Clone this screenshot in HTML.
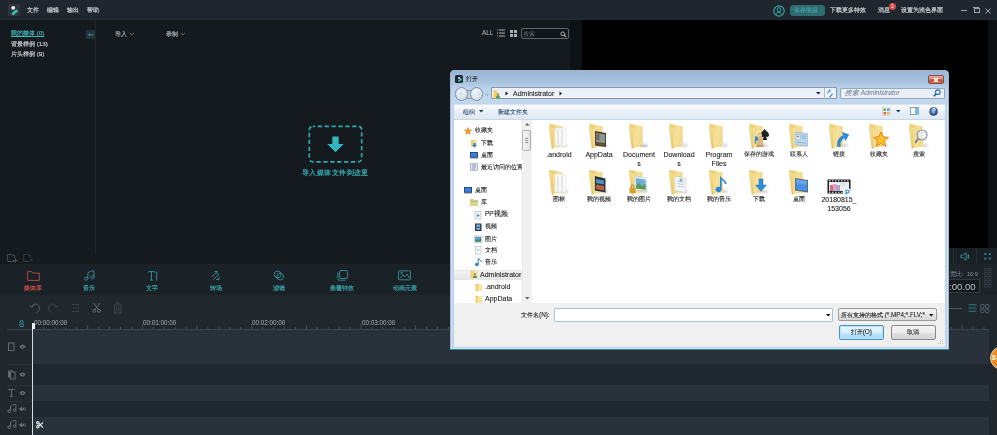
<!DOCTYPE html>
<html><head><meta charset="utf-8">
<style>
*{margin:0;padding:0;box-sizing:border-box}
html,body{width:997px;height:435px;overflow:hidden;background:#161b1f;font-family:"Liberation Sans",sans-serif;}
.a{position:absolute}
.t{position:absolute;white-space:nowrap;line-height:1}
/* top bar */
#top{left:0;top:0;width:997px;height:20px;background:#1f262d}
.mt{color:#c2c7cb;font-size:6.4px;top:6.8px;-webkit-text-stroke:0.22px currentColor}
/* media */
#media{left:0;top:20px;width:570px;height:244px;background:#151a1e}
#strip{left:570px;top:20px;width:12px;height:244px;background:#0e1215}
#prev{left:582px;top:20px;width:405.5px;height:228px;background:#000}
#prevr{left:987.5px;top:20px;width:9.5px;height:228px;background:#0c1013}
#ctrl{left:582px;top:248px;width:415px;height:16px;background:#1a2126}
#tabs{left:0;top:264px;width:582px;height:30.5px;background:#1a2127}
#tl{left:0;top:294.5px;width:997px;height:141px;background:#20282e}
.lbl{font-size:6.2px;top:284.5px;color:#38a0a4;-webkit-text-stroke:0.2px currentColor}
.tr{position:absolute;left:33px;width:956px}
.cj{-webkit-text-stroke:0.1px currentColor}
.t{will-change:transform}
</style></head><body>
<!-- TOP BAR -->
<div id="top" class="a">
  <div class="a" style="left:8px;top:4px;width:12px;height:12px;background:#2b3642;border-radius:1px"></div>
  <svg class="a" style="left:8px;top:4px" width="12" height="12"><circle cx="5.2" cy="3.8" r="1.9" fill="#eef2f4"/><path d="M3.3 9.3L8.5 5.2 10.2 7.3 5 11.4z" fill="#3cc0a0"/></svg>
  <div class="t mt" style="left:27px">文件</div>
  <div class="t mt" style="left:47px">编辑</div>
  <div class="t mt" style="left:67px">输出</div>
  <div class="t mt" style="left:87px">帮助</div>
  <svg class="a" style="left:772.5px;top:4.5px" width="12" height="12"><circle cx="6" cy="6" r="5.2" fill="none" stroke="#3aa6a0" stroke-width="1.2"/><ellipse cx="6" cy="4.8" rx="1.8" ry="2.2" fill="none" stroke="#3aa6a0" stroke-width="1"/><path d="M2.6 9.8c0.8-1.8 2-2.5 3.4-2.5s2.6 0.7 3.4 2.5" fill="none" stroke="#3aa6a0" stroke-width="1"/></svg>
  <div class="a" style="left:790px;top:5px;width:35px;height:11px;background:#2d6c6f;border-radius:3px"></div>
  <div class="t" style="left:794px;top:7px;font-size:6.3px;color:#56a2a4;-webkit-text-stroke:0.1px currentColor">保存项目</div>
  <div class="t mt" style="left:830px;top:7px">下载更多特效</div>
  <div class="t mt" style="left:878px;top:7px">消息</div>
  <div class="a" style="left:888.5px;top:2.5px;width:7px;height:7px;background:#e04a4a;border-radius:50%"></div>
  <div class="t" style="left:890.5px;top:3.5px;font-size:5px;color:#fff">1</div>
  <div class="t mt" style="left:901px;top:7px">设置为浅色界面</div>
  <div class="a" style="left:961px;top:10px;width:6px;height:1px;background:#9aa2a8"></div>
  <div class="a" style="left:974px;top:8px;width:6px;height:5px;border:1px solid #9aa2a8"></div>
  <div class="a" style="left:972.5px;top:7px;width:6px;height:1px;background:#9aa2a8"></div>
  <svg class="a" style="left:985px;top:7.5px" width="6" height="6"><path d="M0.5 0.5l5 5M5.5 0.5l-5 5" stroke="#9aa2a8" stroke-width="1"/></svg>
</div>

<div class="a" style="left:0;top:19px;width:997px;height:1px;background:#222b32"></div>
<!-- MEDIA PANEL -->
<div id="media" class="a"></div>
<div id="strip" class="a"></div>
<div class="a" style="left:95px;top:20px;width:1px;height:234px;background:#1f262b"></div>
<div class="t" style="left:11px;top:30px;font-size:6.2px;color:#3fb3b5;text-decoration:underline;-webkit-text-stroke:0.2px currentColor">我的媒体 (0)</div>
<div class="t" style="left:11px;top:41px;font-size:6.2px;color:#c2c8cc;-webkit-text-stroke:0.2px currentColor">背景样例 (13)</div>
<div class="t" style="left:11px;top:51.3px;font-size:6.2px;color:#c2c8cc;-webkit-text-stroke:0.2px currentColor">片头样例 (9)</div>
<div class="a" style="left:86px;top:29.5px;width:9px;height:9px;background:#26313a"></div>
<div class="t" style="left:87.5px;top:30.5px;font-size:7px;color:#3fb3b5">⇐</div>
<div class="t" style="left:115px;top:30.8px;font-size:6.3px;color:#a8b0b6;-webkit-text-stroke:0.2px currentColor">导入</div><svg class="a" style="left:129px;top:32px" width="6" height="4"><path d="M0.8 1l2 1.9 2-1.9" fill="none" stroke="#80888e" stroke-width="0.8"/></svg>
<div class="t" style="left:166px;top:30.8px;font-size:6.3px;color:#a8b0b6;-webkit-text-stroke:0.2px currentColor">录制</div><svg class="a" style="left:180px;top:32px" width="6" height="4"><path d="M0.8 1l2 1.9 2-1.9" fill="none" stroke="#80888e" stroke-width="0.8"/></svg>
<div class="t" style="left:482px;top:30px;font-size:6.3px;color:#b8bfc3">ALL</div>
<svg class="a" style="left:497px;top:29px" width="9" height="8"><g fill="#a8b0b6"><rect x="0" y="0.5" width="1" height="1"/><rect x="2" y="0.5" width="6" height="1"/><rect x="0" y="3.5" width="1" height="1"/><rect x="2" y="3.5" width="6" height="1"/><rect x="0" y="6.5" width="1" height="1"/><rect x="2" y="6.5" width="6" height="1"/></g></svg>
<svg class="a" style="left:510px;top:30px" width="8" height="7"><g fill="#a8b0b6"><rect x="0" y="0" width="3" height="3"/><rect x="4" y="0" width="3" height="3"/><rect x="0" y="4" width="3" height="3"/><rect x="4" y="4" width="3" height="3"/></g></svg>
<div class="a" style="left:521px;top:28px;width:48px;height:11px;border:1px solid #5d666d;border-radius:2px;background:#121619"></div>
<div class="t" style="left:523px;top:30.5px;font-size:6.2px;color:#6b7379">搜索</div>
<svg class="a" style="left:559.5px;top:30.5px" width="7" height="7"><circle cx="2.8" cy="2.8" r="1.9" fill="none" stroke="#aab2b6" stroke-width="1"/><line x1="4.2" y1="4.2" x2="6" y2="6" stroke="#aab2b6" stroke-width="1.1"/></svg>

<!-- import box -->
<svg class="a" style="left:308px;top:124.5px" width="56" height="39"><rect x="1.3" y="1.3" width="52.4" height="35.6" rx="3.5" fill="none" stroke="#2fa8b0" stroke-width="1.7" stroke-dasharray="4.3 2.6" stroke-dashoffset="2"/></svg>
<svg class="a" style="left:326.5px;top:136px" width="18" height="17"><path d="M5.3 0.5h6.4v7.6h5L8.5 16.3 0.3 8.1h5z" fill="#35b5c0"/></svg>
<div class="t" style="left:302px;top:169px;font-size:7.4px;letter-spacing:0.42px;color:#3aaeb8;-webkit-text-stroke:0.25px currentColor">导入媒体文件到这里</div>

<!-- small media icons -->
<svg class="a" style="left:6px;top:253px" width="30" height="10"><g fill="none" stroke="#4d575e" stroke-width="0.9"><path d="M8.5 8.5H1.7V1.4h4.3l0.8 0.9h1.7v3.2"/><path d="M9.5 5.5v4M7.5 7.5h4" stroke-width="1"/></g><g fill="none" stroke="#353d43" stroke-width="0.9"><path d="M23.5 8.5H17.7V1.4h4.3l0.8 0.9h1.7v2.5"/><path d="M24 5.5l2.5 3M26.5 5.5L24 8.5"/></g></svg>

<!-- PREVIEW -->
<div id="prev" class="a"></div>
<div id="prevr" class="a"></div>
<div id="ctrl" class="a"></div>


<!-- preview right controls -->
<div class="a" style="left:582px;top:264px;width:415px;height:31px;background:#1d242a"></div>
<div class="a" style="left:953px;top:249px;width:1px;height:14px;background:#262e34"></div>
<div class="a" style="left:975.5px;top:249px;width:1px;height:14px;background:#262e34"></div>
<svg class="a" style="left:959.5px;top:252px" width="12" height="9"><path d="M0.8 3.3h1.8l3.6-2.6v7.6L2.6 5.7H0.8z" fill="none" stroke="#379a9e" stroke-width="0.8"/><path d="M8.3 3v3" stroke="#379a9e" stroke-width="1.3" stroke-linecap="round"/></svg>
<svg class="a" style="left:983.5px;top:253px" width="8" height="7"><g fill="#2a7e82"><rect x="0.3" y="0" width="2" height="2"/><rect x="4.8" y="0" width="2" height="2"/><rect x="0.3" y="4.5" width="2" height="2"/><rect x="4.8" y="4.5" width="2" height="2"/></g></svg>
<div class="t" style="left:950px;top:272px;font-size:5.5px;color:#8a949a">宽比:</div>
<div class="t" style="left:966.5px;top:272px;font-size:5.5px;color:#8a949a">16:9</div>
<div class="a" style="left:930px;top:279.2px;width:50px;height:14px;background:#151a1e;border:1px solid #323b41"></div>
<div class="t" style="left:949.2px;top:281.6px;font-size:9.6px;color:#b9c1c5">:00.00</div>
<svg class="a" style="left:984px;top:268px" width="8" height="21"><g fill="none" stroke="#353e44" stroke-width="0.8"><rect x="0.5" y="0.5" width="2.5" height="2.5"/><rect x="4.5" y="0.5" width="2.5" height="2.5"/><rect x="0.5" y="4.5" width="2.5" height="2.5"/><rect x="4.5" y="4.5" width="2.5" height="2.5"/><rect x="0.5" y="8.5" width="2.5" height="2.5"/><rect x="4.5" y="8.5" width="2.5" height="2.5"/><rect x="0.5" y="12.5" width="2.5" height="2.5"/><rect x="4.5" y="12.5" width="2.5" height="2.5"/><rect x="0.5" y="16.5" width="2.5" height="2.5"/><rect x="4.5" y="16.5" width="2.5" height="2.5"/></g></svg>

<!-- TABS -->
<div id="tabs" class="a"></div>
<svg class="a" style="left:27px;top:271px" width="13" height="10"><path d="M0.6 0.6h4l1.2 1.5h6.5v7.3H0.6z" fill="none" stroke="#c24c48" stroke-width="0.9"/></svg>
<div class="t lbl" style="left:24px;color:#c64f4b">媒体库</div>
<svg class="a" style="left:84px;top:270px" width="11" height="11"><g fill="none" stroke="#39a2a6" stroke-width="0.8"><circle cx="2.3" cy="8.6" r="1.6"/><circle cx="8.4" cy="7.2" r="1.6"/><path d="M3.9 8.6V3C5 1.5 8 0.5 10 1v6.2"/></g></svg>
<div class="t lbl" style="left:83px">音乐</div>
<svg class="a" style="left:147.5px;top:270.5px" width="10" height="10"><g stroke="#39a2a6" stroke-width="0.8" fill="none"><path d="M0.5 1.6V0.6h6v1M3.5 0.6v8.5M2.2 9.1h2.6M8.6 0.4v9.2"/></g></svg>
<div class="t lbl" style="left:146px">文字</div>
<svg class="a" style="left:210px;top:270px" width="11" height="11"><g fill="none" stroke="#39a2a6" stroke-width="0.8"><path d="M1.5 7L7 1.5M4.5 1.5H7V4M3.5 9.5L9 4M9 6.5V9.5H6"/></g></svg>
<div class="t lbl" style="left:209.5px">转场</div>
<svg class="a" style="left:273px;top:270px" width="12" height="11"><g fill="none" stroke="#39a2a6" stroke-width="0.8"><circle cx="4.6" cy="4.4" r="3.4"/><circle cx="7.2" cy="6.6" r="3.4"/></g></svg>
<div class="t lbl" style="left:273px">滤镜</div>
<svg class="a" style="left:337px;top:270px" width="12" height="11"><g fill="none" stroke="#39a2a6" stroke-width="0.8"><rect x="2.5" y="0.5" width="8" height="8" rx="1.5"/><path d="M0.8 2.5v6.5a1.2 1.2 0 0 0 1.2 1.2h6.5"/></g></svg>
<div class="t lbl" style="left:330px">叠覆特效</div>
<svg class="a" style="left:398px;top:270px" width="13" height="11"><g fill="none" stroke="#39a2a6" stroke-width="0.8"><rect x="0.5" y="0.8" width="12" height="9" rx="0.8"/><path d="M2 8.2l3-3.2 2 1.8 2.2-2.8 2 4.2"/><circle cx="3.6" cy="3" r="0.8"/></g></svg>
<div class="t lbl" style="left:393px">动画元素</div>

<!-- TIMELINE -->
<div id="tl" class="a"></div>
<svg class="a" style="left:28px;top:301px" width="100" height="13"><g fill="none" stroke="#5f686e" stroke-width="0.9">
<path d="M3.8 5.2A4.2 4.2 0 1 1 8.5 11.3"/><path d="M1.6 4.2L3.6 6.4 5.9 4.6"/>
</g><g fill="none" stroke="#434b51" stroke-width="0.9">
<path d="M28.2 5.2A4.2 4.2 0 1 0 23.5 11.3"/><path d="M30.4 4.2L28.4 6.4 26.1 4.6"/>
<path d="M44 3.5h8M45 7h6M44 10.5h8" stroke-dasharray="2 0.6"/>
</g>
<g fill="none" stroke="#6a7379" stroke-width="0.9"><circle cx="66.3" cy="9.8" r="1.5"/><circle cx="71" cy="9.8" r="1.5"/><path d="M67 8.5L71.8 2M70.3 8.5L65.5 2"/></g>
<g fill="none" stroke="#434b51" stroke-width="0.9"><path d="M85.5 4h8.5M86.5 4.5v7.5h6.5v-7.5M88.5 3V2h2.5v1M88.5 6v4.5M91 6v4.5"/></g>
</svg>
<svg class="a" style="left:18.5px;top:320px" width="6" height="8"><g fill="none" stroke="#35a8ac" stroke-width="0.9"><path d="M1 3V2a1.6 1.6 0 0 1 3.2 0v1"/><rect x="0.7" y="3.8" width="3.8" height="2.8" rx="1.2"/></g></svg>
<div class="t" style="left:34px;top:319.8px;font-size:6.3px;color:#a9b1b6">00:00:00:00</div>
<div class="t" style="left:142.5px;top:319.8px;font-size:6.3px;color:#a9b1b6">00:01:00:00</div>
<div class="t" style="left:252px;top:319.8px;font-size:6.3px;color:#a9b1b6">00:02:00:00</div>
<div class="t" style="left:361.5px;top:319.8px;font-size:6.3px;color:#a9b1b6">00:03:00:00</div>
<div class="a" style="left:7px;top:329px;width:982px;height:1px;background:#3c464d"></div>
<svg class="a" style="left:33px;top:324px" width="956" height="5" id="ticks"><g fill="#4a545b"><rect x="10.53" y="3" width="0.9" height="2"/><rect x="21.46" y="3" width="0.9" height="2"/><rect x="32.39" y="3" width="0.9" height="2"/><rect x="43.32" y="3" width="0.9" height="2"/><rect x="54.25" y="1" width="0.9" height="4"/><rect x="65.18" y="3" width="0.9" height="2"/><rect x="76.11" y="3" width="0.9" height="2"/><rect x="87.04" y="3" width="0.9" height="2"/><rect x="97.97" y="3" width="0.9" height="2"/><rect x="108.90" y="0" width="0.9" height="5"/><rect x="119.83" y="3" width="0.9" height="2"/><rect x="130.76" y="3" width="0.9" height="2"/><rect x="141.69" y="3" width="0.9" height="2"/><rect x="152.62" y="3" width="0.9" height="2"/><rect x="163.55" y="1" width="0.9" height="4"/><rect x="174.48" y="3" width="0.9" height="2"/><rect x="185.41" y="3" width="0.9" height="2"/><rect x="196.34" y="3" width="0.9" height="2"/><rect x="207.27" y="3" width="0.9" height="2"/><rect x="218.20" y="0" width="0.9" height="5"/><rect x="229.13" y="3" width="0.9" height="2"/><rect x="240.06" y="3" width="0.9" height="2"/><rect x="250.99" y="3" width="0.9" height="2"/><rect x="261.92" y="3" width="0.9" height="2"/><rect x="272.85" y="1" width="0.9" height="4"/><rect x="283.78" y="3" width="0.9" height="2"/><rect x="294.71" y="3" width="0.9" height="2"/><rect x="305.64" y="3" width="0.9" height="2"/><rect x="316.57" y="3" width="0.9" height="2"/><rect x="327.50" y="0" width="0.9" height="5"/><rect x="338.43" y="3" width="0.9" height="2"/><rect x="349.36" y="3" width="0.9" height="2"/><rect x="360.29" y="3" width="0.9" height="2"/><rect x="371.22" y="3" width="0.9" height="2"/><rect x="382.15" y="1" width="0.9" height="4"/><rect x="393.08" y="3" width="0.9" height="2"/><rect x="404.01" y="3" width="0.9" height="2"/><rect x="414.94" y="3" width="0.9" height="2"/><rect x="425.87" y="3" width="0.9" height="2"/><rect x="436.80" y="0" width="0.9" height="5"/><rect x="447.73" y="3" width="0.9" height="2"/><rect x="458.66" y="3" width="0.9" height="2"/><rect x="469.59" y="3" width="0.9" height="2"/><rect x="480.52" y="3" width="0.9" height="2"/><rect x="491.45" y="1" width="0.9" height="4"/><rect x="502.38" y="3" width="0.9" height="2"/><rect x="513.31" y="3" width="0.9" height="2"/><rect x="524.24" y="3" width="0.9" height="2"/><rect x="535.17" y="3" width="0.9" height="2"/><rect x="546.10" y="0" width="0.9" height="5"/><rect x="557.03" y="3" width="0.9" height="2"/><rect x="567.96" y="3" width="0.9" height="2"/><rect x="578.89" y="3" width="0.9" height="2"/><rect x="589.82" y="3" width="0.9" height="2"/><rect x="600.75" y="1" width="0.9" height="4"/><rect x="611.68" y="3" width="0.9" height="2"/><rect x="622.61" y="3" width="0.9" height="2"/><rect x="633.54" y="3" width="0.9" height="2"/><rect x="644.47" y="3" width="0.9" height="2"/><rect x="655.40" y="0" width="0.9" height="5"/><rect x="666.33" y="3" width="0.9" height="2"/><rect x="677.26" y="3" width="0.9" height="2"/><rect x="688.19" y="3" width="0.9" height="2"/><rect x="699.12" y="3" width="0.9" height="2"/><rect x="710.05" y="1" width="0.9" height="4"/><rect x="720.98" y="3" width="0.9" height="2"/><rect x="731.91" y="3" width="0.9" height="2"/><rect x="742.84" y="3" width="0.9" height="2"/><rect x="753.77" y="3" width="0.9" height="2"/><rect x="764.70" y="0" width="0.9" height="5"/><rect x="775.63" y="3" width="0.9" height="2"/><rect x="786.56" y="3" width="0.9" height="2"/><rect x="797.49" y="3" width="0.9" height="2"/><rect x="808.42" y="3" width="0.9" height="2"/><rect x="819.35" y="1" width="0.9" height="4"/><rect x="830.28" y="3" width="0.9" height="2"/><rect x="841.21" y="3" width="0.9" height="2"/><rect x="852.14" y="3" width="0.9" height="2"/><rect x="863.07" y="3" width="0.9" height="2"/><rect x="874.00" y="0" width="0.9" height="5"/><rect x="884.93" y="3" width="0.9" height="2"/><rect x="895.86" y="3" width="0.9" height="2"/><rect x="906.79" y="3" width="0.9" height="2"/><rect x="917.72" y="3" width="0.9" height="2"/><rect x="928.65" y="1" width="0.9" height="4"/><rect x="939.58" y="3" width="0.9" height="2"/><rect x="950.51" y="3" width="0.9" height="2"/></g></svg>
<!-- tracks -->
<div class="a" style="left:33px;top:330px;width:956px;height:34px;background:#29323a"></div>
<div class="a" style="left:33px;top:364px;width:956px;height:21px;background:#20282f"></div>
<div class="a" style="left:33px;top:385px;width:956px;height:16px;background:#29323a"></div>
<div class="a" style="left:33px;top:401px;width:956px;height:16px;background:#20282f"></div>
<div class="a" style="left:33px;top:417px;width:956px;height:18px;background:#29323a"></div>
<div class="a" style="left:7px;top:364px;width:26px;height:1px;background:#2a3238"></div>
<div class="a" style="left:7px;top:385px;width:26px;height:1px;background:#2a3238"></div>
<div class="a" style="left:7px;top:401px;width:26px;height:1px;background:#2a3238"></div>
<div class="a" style="left:7px;top:417px;width:26px;height:1px;background:#2a3238"></div>
<svg class="a" style="left:6px;top:340px" width="22" height="92"><g fill="none" stroke="#6c757b" stroke-width="0.9">
<rect x="2.5" y="3" width="5.5" height="7.5"/>
<rect x="4.5" y="32" width="4.5" height="7"/><path d="M2.5 37.5v-6.5h4.5"/><path d="M3.5 37.5v-5.5"/>
<path d="M2.3 50.3v-0.8h6.5v0.8M5.5 49.5v6.8M4 56.3h3"/>
<circle cx="3.2" cy="71.2" r="1.3"/><circle cx="8.6" cy="70.2" r="1.3"/><path d="M4.5 71.2v-5.2c1.2-1 3.5-1.6 5.4-1.6v5.8"/>
<circle cx="3.2" cy="87.2" r="1.3"/><circle cx="8.6" cy="86.2" r="1.3"/><path d="M4.5 87.2v-5.2c1.2-1 3.5-1.6 5.4-1.6v5.8"/>
</g><path d="M13.5 6.8c1.2-1.6 2.2-2 3-2s1.8 0.4 3 2c-1.2 1.6-2.2 2-3 2s-1.8-0.4-3-2z" fill="#6c757b"/><circle cx="16.5" cy="6.8" r="0.9" fill="#222a30"/><path d="M13.5 34.5c1.2-1.6 2.2-2 3-2s1.8 0.4 3 2c-1.2 1.6-2.2 2-3 2s-1.8-0.4-3-2z" fill="#6c757b"/><circle cx="16.5" cy="34.5" r="0.9" fill="#222a30"/><path d="M13.5 53c1.2-1.6 2.2-2 3-2s1.8 0.4 3 2c-1.2 1.6-2.2 2-3 2s-1.8-0.4-3-2z" fill="#6c757b"/><circle cx="16.5" cy="53" r="0.9" fill="#222a30"/><path d="M13 69l3.2-2.4v4.8z" fill="#6c757b"/><rect x="16.6" y="67.8" width="1.6" height="2.4" fill="#6c757b"/><path d="M19.3 67.4v3.2" stroke="#6c757b" stroke-width="0.8"/><path d="M13 85l3.2-2.4v4.8z" fill="#6c757b"/><rect x="16.6" y="83.8" width="1.6" height="2.4" fill="#6c757b"/><path d="M19.3 83.4v3.2" stroke="#6c757b" stroke-width="0.8"/></svg>
<svg class="a" style="left:36px;top:421px" width="8" height="8"><g fill="none" stroke="#dfe4e6" stroke-width="1.1"><circle cx="1.8" cy="1.8" r="1.2"/><circle cx="1.8" cy="5.8" r="1.2"/><path d="M2.8 2.5L7 6.5M2.8 5L7 1.5"/></g></svg>
<div class="a" style="left:32px;top:323px;width:1.2px;height:112px;background:#d8dde0"></div>
<div class="a" style="left:32px;top:322.5px;width:3px;height:6px;background:#f2f4f5;border-radius:1px 1px 0 0"></div>
<!-- right side of timeline toolbar -->
<div class="a" style="left:940px;top:307.5px;width:22px;height:1px;background:#4c565c"></div>
<svg class="a" style="left:967px;top:304px" width="24" height="9"><g fill="none" stroke="#33959a" stroke-width="0.8"><path d="M1.5 0.8h8M1.5 4h8M1.5 7.2h8"/></g><g fill="none" stroke="#59636a" stroke-width="0.9"><rect x="13.5" y="0.5" width="3.5" height="3.5" rx="0.8"/><rect x="18.5" y="0.5" width="3.5" height="3.5" rx="0.8"/><rect x="13.5" y="5" width="3.5" height="3.5" rx="0.8"/><rect x="18.5" y="5" width="3.5" height="3.5" rx="0.8"/></g></svg>

<!-- DIALOG -->
<svg width="0" height="0" style="position:absolute">
<defs><radialGradient id="sh"><stop offset="0" stop-color="#000" stop-opacity="0.16"/><stop offset="1" stop-color="#000" stop-opacity="0"/></radialGradient>
<linearGradient id="gb" x1="0" y1="0" x2="1" y2="0.3"><stop offset="0" stop-color="#e9c65e"/><stop offset="0.6" stop-color="#f6e09a"/><stop offset="1" stop-color="#f2d98a"/></linearGradient>
<linearGradient id="gf" x1="0" y1="0" x2="0.3" y2="1"><stop offset="0" stop-color="#f6df8e"/><stop offset="1" stop-color="#ecc966"/></linearGradient>
<symbol id="fb" viewBox="0 0 18 25"><path d="M1.5 0L13.5 2.3 14 22.6 5 23.8Z" fill="url(#gb)"/></symbol>
<symbol id="ff" viewBox="0 0 18 25"><path d="M0 0.5L5.3 3.7 5.5 22.6 3 25Z" fill="url(#gf)" stroke="#d9b452" stroke-width="0.35"/><path d="M5 4L5.1 22.3" stroke="#fff6d6" stroke-width="0.7"/></symbol>
</defs>
</svg>
<div class="a" style="left:450px;top:70px;width:499px;height:280px;background:#bcd4ec;border:1px solid #9fb6cc;border-radius:4px 4px 1px 1px;box-shadow:inset 0 0 0 1px #cfe0f2"></div>
<div class="a" style="left:451px;top:71px;width:497px;height:32px;background:linear-gradient(#9ab6d5,#a9c3df 35%,#bcd3eb 55%,#c1d8ef);border-radius:3px 3px 0 0"></div>
<div class="a" style="left:455px;top:75px;width:8px;height:8px;background:#1e2b36;border-radius:1.5px"></div>
<div class="a" style="left:457.5px;top:76.5px;width:2.5px;height:2.5px;background:#eef;border-radius:50%"></div>
<div class="a" style="left:457.5px;top:79px;width:4px;height:2px;background:#3cc0a0;transform:rotate(-40deg)"></div>
<div class="t cj" style="left:465.5px;top:76px;font-size:6.4px;color:#1a1a1a">打开</div>
<div class="a" style="left:928px;top:75px;width:16px;height:9px;background:linear-gradient(#e6b0a2,#d48a78 45%,#c4503c 55%,#cf6a52);border:1px solid #8c4a3e;border-radius:2px"></div>
<svg class="a" style="left:932px;top:76.5px" width="8" height="6"><path d="M2 1l4 4M6 1L2 5" stroke="#fff" stroke-width="1.4"/></svg>
<!-- nav -->
<div class="a" style="left:460px;top:89.5px;width:18px;height:9.5px;background:#c3d3e2;border-top:1px solid #8a9cae;border-bottom:1px solid #8a9cae"></div>
<div class="a" style="left:454.8px;top:87.3px;width:13.4px;height:13.4px;border-radius:50%;background:radial-gradient(circle at 50% 40%,#f2f6fa,#dbe4ec 60%,#c4d0dc);border:1px solid #7f91a3"></div>
<div class="a" style="left:469.6px;top:87.3px;width:13.4px;height:13.4px;border-radius:50%;background:radial-gradient(circle at 50% 40%,#f2f6fa,#dbe4ec 60%,#c4d0dc);border:1px solid #7f91a3"></div>
<svg class="a" style="left:457px;top:90px" width="26" height="8"><g fill="none" stroke="#d6dee6" stroke-width="1.2"><path d="M7.5 4h-4M5 2L3 4l2 2M19 4h4M21.5 2l2 2-2 2"/></g></svg>

<svg class="a" style="left:484.5px;top:92.5px" width="4" height="4"><path d="M0.5 1h3L2 3z" fill="none" stroke="#9ab0c4" stroke-width="0.6"/></svg>
<div class="a" style="left:490.5px;top:87px;width:346px;height:12px;background:linear-gradient(#e9eef7,#f0f4fa);border:1px solid #8496a8;border-radius:1px"></div>
<div class="a" style="left:823.5px;top:88px;width:1px;height:10.5px;background:#a9bccd"></div>
<svg class="a" style="left:493px;top:88.5px" width="8" height="10"><path d="M0.5 1L4 1.5V9L0.5 9.5Z" fill="#f0cf60"/><circle cx="5" cy="5" r="1.3" fill="#c8a070"/><path d="M3 9c0-2 1-3 2-3s2 1 2 3z" fill="#4aa050"/></svg>
<svg class="a" style="left:504.5px;top:91px" width="4" height="5"><path d="M0.5 0.5L3 2.5 0.5 4.5z" fill="#111"/></svg>
<div class="t" style="left:512.5px;top:89.5px;font-size:7px;color:#1e1e1e;-webkit-text-stroke:0.1px currentColor">Administrator</div>
<svg class="a" style="left:558.5px;top:91px" width="4" height="5"><path d="M0.5 0.5L3 2.5 0.5 4.5z" fill="#111"/></svg>
<svg class="a" style="left:815.5px;top:92px" width="5" height="3"><path d="M0 0h4.5L2.25 2.5z" fill="#1a1a40"/></svg>
<svg class="a" style="left:826px;top:89px" width="8" height="9"><path d="M2 4.5A2.5 2.5 0 0 1 4 1.5M6 4.5A2.5 2.5 0 0 1 4 7.5" fill="none" stroke="#2a7ad0" stroke-width="1"/><path d="M3.2 0.2l1.8 1.3-1.8 1.3zM4.8 6.2l-1.8 1.3 1.8 1.3z" fill="#2a7ad0"/></svg>
<div class="a" style="left:839.5px;top:87.5px;width:105px;height:11.5px;background:#e9eef7;border:1px solid #95a8ba;border-radius:1px"></div>
<div class="t cj" style="left:845px;top:90px;font-size:6.6px;color:#7c8a96;font-style:italic">搜索 Administrator</div>
<svg class="a" style="left:933px;top:89px" width="8" height="8"><circle cx="4.8" cy="3.2" r="2.3" fill="none" stroke="#2a6fc0" stroke-width="1.1"/><path d="M3.2 4.8L0.8 7.2" stroke="#1f4f90" stroke-width="1.4"/></svg>
<!-- toolbar -->
<div class="a" style="left:454px;top:103.5px;width:491px;height:16px;background:linear-gradient(#fafcfe,#e6eef7 55%,#dfe9f4);border-top:1px solid #d9e4ef;border-bottom:1px solid #c9d7e5"></div>
<div class="t" style="left:463px;top:108.8px;font-size:6.4px;color:#2a4262;-webkit-text-stroke:0.08px currentColor">组织</div>
<svg class="a" style="left:478.5px;top:110px" width="5" height="3"><path d="M0 0h4.5L2.25 2.5z" fill="#1e395b"/></svg>
<div class="t" style="left:498.2px;top:108.5px;font-size:6.4px;color:#2a4262;-webkit-text-stroke:0.08px currentColor">新建文件夹</div>
<svg class="a" style="left:881.5px;top:107px" width="10" height="10"><rect x="0.5" y="0.5" width="8" height="8" fill="#eef2f6" stroke="#b8c4d0" stroke-width="0.5"/><rect x="1.5" y="1.5" width="2.5" height="2.5" fill="#70b050"/><rect x="5" y="1.5" width="2.5" height="2.5" fill="#5a9ad8"/><rect x="1.5" y="5" width="2.5" height="2.5" fill="#e06a40"/><rect x="5" y="5" width="2.5" height="2.5" fill="#e8b040"/></svg>
<svg class="a" style="left:895.5px;top:110px" width="5" height="3"><path d="M0 0h4.5L2.25 2.5z" fill="#1e395b"/></svg>
<div class="a" style="left:910px;top:107px;width:9px;height:8px;background:#fff;border:1px solid #8aa0b8"></div>
<div class="a" style="left:914.5px;top:107.5px;width:4px;height:7px;background:#7cb8e0"></div>
<div class="a" style="left:929px;top:107px;width:9px;height:9px;border-radius:50%;background:radial-gradient(circle at 40% 35%,#7ab0f0,#1a4fb0 70%);border:0.7px solid #555"></div>
<div class="t" style="left:931.5px;top:108.2px;font-size:6.5px;color:#fff;font-weight:bold">?</div>
<!-- content -->
<div class="a" style="left:454px;top:120px;width:491px;height:183px;background:#fff"></div>
<div class="a" style="left:522px;top:120px;width:9.5px;height:183px;background:#eef0f2;border-left:1px solid #e6e8ea"></div>
<svg class="a" style="left:524.5px;top:123px" width="5" height="3"><path d="M0 2.5h4.5L2.25 0z" fill="#606468"/></svg>
<svg class="a" style="left:524.5px;top:297px" width="5" height="3"><path d="M0 0h4.5L2.25 2.5z" fill="#606468"/></svg>
<div class="a" style="left:522.3px;top:129.5px;width:8.6px;height:21px;background:linear-gradient(90deg,#f4f4f4,#e2e2e2);border:1px solid #b0b2b6;border-radius:2px"></div>
<div class="a" style="left:525px;top:138px;width:3px;height:5px;border-top:1px solid #999;border-bottom:1px solid #999;background:linear-gradient(transparent 40%,#999 40%,#999 60%,transparent 60%)"></div>
<div class="a" style="left:454px;top:269.5px;width:68px;height:10.5px;background:linear-gradient(#f4f4f4,#e4e4e4);border-top:1px solid #e6e6e6"></div>
<svg class="a" style="left:464px;top:126.6px" width="9" height="9"><path d="M4 0.3l1.1 2.4 2.6 0.3-1.9 1.8 0.5 2.6L4 6.1 1.7 7.4l0.5-2.6L0.3 3l2.6-0.3z" fill="#f0a020" stroke="#c06010" stroke-width="0.3"/></svg><div class="t cj" style="left:474.8px;top:127.3px;font-size:6.4px;color:#1e1e1e">收藏夹</div>
<svg class="a" style="left:469.7px;top:139.1px" width="9" height="9"><path d="M1 0.5L4 1v7L1 7.5z" fill="#f0d070"/><path d="M4 1h3v6H4z" fill="#f6e4a0"/><path d="M3.5 4h2v2h1.5L4.5 8.5 2 6h1.5z" fill="#2a80d0"/></svg><div class="t cj" style="left:480.6px;top:139.8px;font-size:6.4px;color:#1e1e1e">下载</div>
<svg class="a" style="left:469.7px;top:151.1px" width="9" height="9"><rect x="0" y="1" width="8" height="6" fill="#1a3f80"/><rect x="0.8" y="1.8" width="6.4" height="4" fill="#3f7fd0"/><rect x="0" y="6.5" width="8" height="1" fill="#7a8a9a"/></svg><div class="t cj" style="left:480.6px;top:151.8px;font-size:6.4px;color:#1e1e1e">桌面</div>
<svg class="a" style="left:469.7px;top:162.8px" width="9" height="9"><rect x="0.5" y="0.5" width="7" height="7" fill="#dde4ea" stroke="#8090a0" stroke-width="0.5"/><path d="M2 2h4M2 4h4M2 6h3" stroke="#5070a0" stroke-width="0.6"/></svg><div class="t cj" style="left:480.6px;top:163.5px;font-size:6.4px;color:#1e1e1e">最近访问的位置</div>
<svg class="a" style="left:464px;top:186.3px" width="9" height="9"><rect x="0" y="1" width="8" height="6" fill="#1a3f80"/><rect x="0.8" y="1.8" width="6.4" height="4" fill="#3f7fd0"/><rect x="0" y="6.5" width="8" height="1" fill="#7a8a9a"/></svg><div class="t cj" style="left:474.8px;top:187.0px;font-size:6.4px;color:#1e1e1e">桌面</div>
<svg class="a" style="left:469.7px;top:198.3px" width="9" height="9"><path d="M0 1h3l1 1h4v6H0z" fill="#e8c860"/><rect x="1" y="3" width="6.5" height="5" fill="#8ac0e8"/><path d="M0 4h8v4H0z" fill="#f0d880" opacity="0.8"/></svg><div class="t cj" style="left:480.6px;top:199.0px;font-size:6.4px;color:#1e1e1e">库</div>
<svg class="a" style="left:474.2px;top:210.5px" width="9" height="9"><rect x="1" y="0.5" width="6" height="7.5" fill="#eef2f6" stroke="#9aaabb" stroke-width="0.5"/><path d="M3 3l3 1.5-3 1.5z" fill="#3a90d0"/></svg><div class="t cj" style="left:485.2px;top:211.2px;font-size:6.5px;color:#1e1e1e">PP视频</div>
<svg class="a" style="left:474.2px;top:222.7px" width="9" height="9"><rect x="1" y="0.5" width="6.5" height="7.5" fill="#2a3340"/><rect x="2.2" y="1.5" width="4" height="2.3" fill="#7ab0e0"/><rect x="2.2" y="4.6" width="4" height="2.3" fill="#7ab0e0"/></svg><div class="t cj" style="left:485.2px;top:223.4px;font-size:6.4px;color:#1e1e1e">视频</div>
<svg class="a" style="left:474.2px;top:234.9px" width="9" height="9"><rect x="0" y="1" width="8" height="6.5" fill="#eef2f6" stroke="#8899aa" stroke-width="0.5"/><rect x="1" y="2" width="6" height="4.5" fill="#5aa0d0"/><path d="M1 6.5l2-2 1.5 1 2.5-2.5v3.5z" fill="#3a8040"/></svg><div class="t cj" style="left:485.2px;top:235.6px;font-size:6.4px;color:#1e1e1e">图片</div>
<svg class="a" style="left:474.2px;top:246.4px" width="9" height="9"><rect x="1.5" y="0.5" width="5.5" height="7.5" fill="#f6f8fa" stroke="#a0aab4" stroke-width="0.5"/><path d="M3 4h2.5" stroke="#5aa0d0" stroke-width="0.8"/></svg><div class="t cj" style="left:485.2px;top:247.1px;font-size:6.4px;color:#1e1e1e">文档</div>
<svg class="a" style="left:474.2px;top:258.3px" width="9" height="9"><circle cx="2.8" cy="6.5" r="1.8" fill="#2a80d0"/><path d="M4.2 6.5V0.5c1 1 3 1.5 3 3.5" fill="none" stroke="#2a80d0" stroke-width="1"/></svg><div class="t cj" style="left:485.2px;top:259.0px;font-size:6.4px;color:#1e1e1e">音乐</div>
<svg class="a" style="left:469.7px;top:270.3px" width="9" height="9"><path d="M0.5 0.5L4 1v7.5L0.5 8z" fill="#f0d070"/><path d="M3.5 1h4v7h-4z" fill="#f6e4a0"/><circle cx="5" cy="4" r="1.2" fill="#c09070"/><path d="M3 8c0-2 1-2.5 2-2.5s2 .5 2 2.5z" fill="#4a9a50"/></svg><div class="t" style="left:480px;top:271.0px;font-size:7px;color:#1e1e1e;-webkit-text-stroke:0.1px currentColor">Administrator</div>
<svg class="a" style="left:475.3px;top:282.5px" width="9" height="9"><path d="M0.5 0.5L3.5 1v7.5L0.5 8z" fill="#f0d070"/><path d="M3.5 1h3.5v7h-3.5z" fill="#f6e4a0"/></svg><div class="t" style="left:485px;top:283.2px;font-size:7px;color:#1e1e1e;-webkit-text-stroke:0.1px currentColor">.android</div>
<svg class="a" style="left:475.3px;top:294.5px" width="9" height="9"><path d="M0.5 0.5L3.5 1v7.5L0.5 8z" fill="#f0d070"/><path d="M3.5 1h3.5v7h-3.5z" fill="#f6e4a0"/></svg><div class="t" style="left:485px;top:295.2px;font-size:7px;color:#1e1e1e;-webkit-text-stroke:0.1px currentColor">AppData</div>
<div class="a" style="left:521.5px;top:160px;width:1px;height:12px;background:#fff"></div><svg class="a" style="left:548.5px;top:124px" width="21" height="26" viewBox="0 0 21 26"><ellipse cx="15.5" cy="21.5" rx="5.5" ry="3" fill="url(#sh)"/><use href="#fb" x="0" y="0" width="18" height="25"/><path d="M6 4h11v18H6z" fill="#fafafa" stroke="#d0d0d0" stroke-width="0.4"/><path d="M8 6h2v16H8zM12 5h2v17h-2z" fill="#e6e6e6"/><use href="#ff" x="0" y="0" width="18" height="25"/></svg><div class="t" style="left:518.5px;width:80px;text-align:center;top:150.5px;font-size:7px;color:#1e1e1e;-webkit-text-stroke:0.1px currentColor">.android</div><svg class="a" style="left:588.6px;top:124px" width="21" height="26" viewBox="0 0 21 26"><ellipse cx="15.5" cy="21.5" rx="5.5" ry="3" fill="url(#sh)"/><use href="#fb" x="0" y="0" width="18" height="25"/><path d="M6 7l11 2v14l-11-1.5z" fill="#4a4038"/><path d="M7 9l9 1.5v10.5l-9-1.2z" fill="#9a9488"/><path d="M7.5 10l3 0.5v6l-3-0.4z" fill="#6a6860"/><path d="M11.5 12l4 0.7v4l-4-0.5z" fill="#7a9aa0"/><path d="M7 18l9 1.2v1.8l-9-1.2z" fill="#5a4a38"/><use href="#ff" x="0" y="0" width="18" height="25"/></svg><div class="t" style="left:558.6px;width:80px;text-align:center;top:150.5px;font-size:7px;color:#1e1e1e;-webkit-text-stroke:0.1px currentColor">AppData</div><svg class="a" style="left:628.7px;top:124px" width="21" height="26" viewBox="0 0 21 26"><ellipse cx="15.5" cy="21.5" rx="5.5" ry="3" fill="url(#sh)"/><use href="#fb" x="0" y="0" width="18" height="25"/><path d="M13 17l2 1v4l-2 0z" fill="#e0e8ee"/><ellipse cx="15" cy="22" rx="4" ry="1.3" fill="#000" opacity="0.1"/><use href="#ff" x="0" y="0" width="18" height="25"/></svg><div class="t" style="left:598.7px;width:80px;text-align:center;top:150.5px;font-size:7px;color:#1e1e1e;-webkit-text-stroke:0.1px currentColor">Document</div><div class="t" style="left:598.7px;width:80px;text-align:center;top:159.7px;font-size:7px;color:#1e1e1e;-webkit-text-stroke:0.1px currentColor">s</div><svg class="a" style="left:668.8px;top:124px" width="21" height="26" viewBox="0 0 21 26"><ellipse cx="15.5" cy="21.5" rx="5.5" ry="3" fill="url(#sh)"/><use href="#fb" x="0" y="0" width="18" height="25"/><path d="M13 17l2 1v4l-2 0z" fill="#e0e8ee"/><use href="#ff" x="0" y="0" width="18" height="25"/></svg><div class="t" style="left:638.8px;width:80px;text-align:center;top:150.5px;font-size:7px;color:#1e1e1e;-webkit-text-stroke:0.1px currentColor">Download</div><div class="t" style="left:638.8px;width:80px;text-align:center;top:159.7px;font-size:7px;color:#1e1e1e;-webkit-text-stroke:0.1px currentColor">s</div><svg class="a" style="left:708.9px;top:124px" width="21" height="26" viewBox="0 0 21 26"><ellipse cx="15.5" cy="21.5" rx="5.5" ry="3" fill="url(#sh)"/><use href="#fb" x="0" y="0" width="18" height="25"/><path d="M13 17l2 1v4l-2 0z" fill="#e0e8ee"/><use href="#ff" x="0" y="0" width="18" height="25"/></svg><div class="t" style="left:678.9px;width:80px;text-align:center;top:150.5px;font-size:7px;color:#1e1e1e;-webkit-text-stroke:0.1px currentColor">Program</div><div class="t" style="left:678.9px;width:80px;text-align:center;top:159.7px;font-size:7px;color:#1e1e1e;-webkit-text-stroke:0.1px currentColor">Files</div><svg class="a" style="left:749.0px;top:124px" width="21" height="26" viewBox="0 0 21 26"><ellipse cx="15.5" cy="21.5" rx="5.5" ry="3" fill="url(#sh)"/><use href="#fb" x="0" y="0" width="18" height="25"/><path d="M6 12l3 1v3l-2 1v3l-3-1z" fill="#3a8ad0"/><path d="M15.5 5c1.5 2 4.5 3.2 4.5 6 0 1.8-1.6 2.3-2.8 1.6l0.9 3.4h-4.4l0.9-3.4c-1.2 0.7-2.8 0.2-2.8-1.6 0-2.8 2.2-4 3.7-6z" fill="#202020"/><circle cx="11" cy="11" r="2" fill="#e8d2a8" stroke="#a07848" stroke-width="0.3"/><path d="M8 22c0-4 1.2-7.5 3-9 1.8 1.5 3 5 3 9z" fill="#d8b888" stroke="#a07848" stroke-width="0.3"/><path d="M7.5 21.5h7v1.2h-7z" fill="#b08858"/><use href="#ff" x="0" y="0" width="18" height="25"/></svg><div class="t cj" style="left:719.0px;width:80px;text-align:center;top:150.5px;font-size:6.4px;color:#1e1e1e">保存的游戏</div><svg class="a" style="left:789.1px;top:124px" width="21" height="26" viewBox="0 0 21 26"><ellipse cx="15.5" cy="21.5" rx="5.5" ry="3" fill="url(#sh)"/><use href="#fb" x="0" y="0" width="18" height="25"/><path d="M5.5 8l13 1.5v12.5l-13-1.2z" fill="#b8d8f0" stroke="#7aa8d0" stroke-width="0.5"/><rect x="7" y="10.5" width="4" height="5" fill="#e8f0f6" stroke="#8aa8c0" stroke-width="0.4"/><circle cx="9" cy="12.5" r="1" fill="#b07050"/><path d="M12.5 12h4.5M12.5 14h4.5M7 18l10 1" stroke="#6a98c0" stroke-width="0.6"/><use href="#ff" x="0" y="0" width="18" height="25"/></svg><div class="t cj" style="left:759.1px;width:80px;text-align:center;top:150.5px;font-size:6.4px;color:#1e1e1e">联系人</div><svg class="a" style="left:829.2px;top:124px" width="21" height="26" viewBox="0 0 21 26"><ellipse cx="15.5" cy="21.5" rx="5.5" ry="3" fill="url(#sh)"/><use href="#fb" x="0" y="0" width="18" height="25"/><path d="M8.5 22.5C8 17 10 13 14.5 11.5L13.2 8.5 19.8 10.5 16.5 16.8 15.5 14C12.5 15 11 18 11.3 22.5Z" fill="#2a8ee0" stroke="#1a5aa0" stroke-width="0.4"/><path d="M11.5 20c1-2 3-3.5 5-4" stroke="#e8d070" stroke-width="0.8" fill="none" opacity="0.6"/><use href="#ff" x="0" y="0" width="18" height="25"/></svg><div class="t cj" style="left:799.2px;width:80px;text-align:center;top:150.5px;font-size:6.4px;color:#1e1e1e">链接</div><svg class="a" style="left:869.3px;top:124px" width="21" height="26" viewBox="0 0 21 26"><ellipse cx="15.5" cy="21.5" rx="5.5" ry="3" fill="url(#sh)"/><use href="#fb" x="0" y="0" width="18" height="25"/><path d="M12 8l2.2 4.8 5.2 0.6-3.9 3.5 1.1 5.1L12 19.4 7.4 22l1.1-5.1-3.9-3.5 5.2-0.6z" fill="#f8c030" stroke="#e07010" stroke-width="0.6"/><use href="#ff" x="0" y="0" width="18" height="25"/><path d="M12 8l2.2 4.8 5.2 0.6-3.9 3.5 1.1 5.1L12 19.4 7.4 22l1.1-5.1-3.9-3.5 5.2-0.6z" fill="#f8c030" stroke="#e07010" stroke-width="0.6"/></svg><div class="t cj" style="left:839.3px;width:80px;text-align:center;top:150.5px;font-size:6.4px;color:#1e1e1e">收藏夹</div><svg class="a" style="left:909.4px;top:124px" width="21" height="26" viewBox="0 0 21 26"><ellipse cx="15.5" cy="21.5" rx="5.5" ry="3" fill="url(#sh)"/><use href="#fb" x="0" y="0" width="18" height="25"/><circle cx="13" cy="11" r="5" fill="#e8f0f6" fill-opacity="0.7" stroke="#8a9aa8" stroke-width="1.2"/><path d="M9.5 14.5L6 19" stroke="#6a7a88" stroke-width="1.8"/><use href="#ff" x="0" y="0" width="18" height="25"/></svg><div class="t cj" style="left:879.4px;width:80px;text-align:center;top:150.5px;font-size:6.4px;color:#1e1e1e">搜索</div><svg class="a" style="left:548.5px;top:170px" width="21" height="26" viewBox="0 0 21 26"><ellipse cx="15.5" cy="21.5" rx="5.5" ry="3" fill="url(#sh)"/><use href="#fb" x="0" y="0" width="18" height="25"/><path d="M6 4h11v18H6z" fill="#fafafa" stroke="#d0d0d0" stroke-width="0.4"/><path d="M8 6h2v16H8zM12 5h2v17h-2z" fill="#e6e6e6"/><use href="#ff" x="0" y="0" width="18" height="25"/></svg><div class="t cj" style="left:518.5px;width:80px;text-align:center;top:196.0px;font-size:6.4px;color:#1e1e1e">图标</div><svg class="a" style="left:588.6px;top:170px" width="21" height="26" viewBox="0 0 21 26"><ellipse cx="15.5" cy="21.5" rx="5.5" ry="3" fill="url(#sh)"/><use href="#fb" x="0" y="0" width="18" height="25"/><path d="M5.5 6l11 2.5v14l-11-2z" fill="#2a3440"/><path d="M7 9l8 1.5v4L7 13z" fill="#4a90c0"/><path d="M7 14.5l8 1.5v4.5L7 19z" fill="#c06040"/><use href="#ff" x="0" y="0" width="18" height="25"/></svg><div class="t cj" style="left:558.6px;width:80px;text-align:center;top:196.0px;font-size:6.4px;color:#1e1e1e">我的视频</div><svg class="a" style="left:628.7px;top:170px" width="21" height="26" viewBox="0 0 21 26"><ellipse cx="15.5" cy="21.5" rx="5.5" ry="3" fill="url(#sh)"/><use href="#fb" x="0" y="0" width="18" height="25"/><path d="M6 6l11.5 2v13L6 20z" fill="#e8f0f4" stroke="#a0b0bc" stroke-width="0.4"/><path d="M7 8l9.5 1.7v10L7 18.5z" fill="#6ab0d8"/><path d="M7 16l3-3 3 3 3.5-2v5.5L7 18.5z" fill="#5a9a50"/><use href="#ff" x="0" y="0" width="18" height="25"/><rect x="0.5" y="18" width="6" height="5" fill="#d8a028" rx="0.6"/><path d="M2 18v-1.5a1.5 1.5 0 0 1 3 0V18" fill="none" stroke="#a07010" stroke-width="0.9"/></svg><div class="t cj" style="left:598.7px;width:80px;text-align:center;top:196.0px;font-size:6.4px;color:#1e1e1e">我的图片</div><svg class="a" style="left:668.8px;top:170px" width="21" height="26" viewBox="0 0 21 26"><ellipse cx="15.5" cy="21.5" rx="5.5" ry="3" fill="url(#sh)"/><use href="#fb" x="0" y="0" width="18" height="25"/><path d="M5.5 6l11.5 2.5v14l-11.5-2z" fill="#f2f4f6" stroke="#a8b4be" stroke-width="0.4"/><path d="M8 11l7 1.2M8 13.5l7 1.2M8 16l7 1.2" stroke="#a0b4c4" stroke-width="0.6"/><circle cx="12" cy="10" r="1.5" fill="#6ab0d8"/><use href="#ff" x="0" y="0" width="18" height="25"/></svg><div class="t cj" style="left:638.8px;width:80px;text-align:center;top:196.0px;font-size:6.4px;color:#1e1e1e">我的文档</div><svg class="a" style="left:708.9px;top:170px" width="21" height="26" viewBox="0 0 21 26"><ellipse cx="15.5" cy="21.5" rx="5.5" ry="3" fill="url(#sh)"/><use href="#fb" x="0" y="0" width="18" height="25"/><circle cx="9.5" cy="19.5" r="2.8" fill="#2a88d8"/><path d="M11.8 19.5V8c2 2 5 3 5 6" fill="none" stroke="#2a88d8" stroke-width="1.6"/><use href="#ff" x="0" y="0" width="18" height="25"/></svg><div class="t cj" style="left:678.9px;width:80px;text-align:center;top:196.0px;font-size:6.4px;color:#1e1e1e">我的音乐</div><svg class="a" style="left:749.0px;top:170px" width="21" height="26" viewBox="0 0 21 26"><ellipse cx="15.5" cy="21.5" rx="5.5" ry="3" fill="url(#sh)"/><use href="#fb" x="0" y="0" width="18" height="25"/><path d="M10 9h4v6h3.5L12 21.5 6.5 15H10z" fill="#2a90e0" stroke="#1a60a8" stroke-width="0.4"/><use href="#ff" x="0" y="0" width="18" height="25"/></svg><div class="t cj" style="left:719.0px;width:80px;text-align:center;top:196.0px;font-size:6.4px;color:#1e1e1e">下载</div><svg class="a" style="left:789.1px;top:170px" width="21" height="26" viewBox="0 0 21 26"><ellipse cx="15.5" cy="21.5" rx="5.5" ry="3" fill="url(#sh)"/><use href="#fb" x="0" y="0" width="18" height="25"/><path d="M6 8l13 2v12.5L6 20.5z" fill="#5a6878"/><path d="M7 9.3l11 1.7v10.3L7 19.5z" fill="#4a90e0"/><path d="M7 9.3l11 1.7v4L7 13z" fill="#7ab4f0" opacity="0.6"/><use href="#ff" x="0" y="0" width="18" height="25"/></svg><div class="t cj" style="left:759.1px;width:80px;text-align:center;top:196.0px;font-size:6.4px;color:#1e1e1e">桌面</div><svg class="a" style="left:826.7px;top:178.5px" width="26" height="17"><rect x="0.5" y="0.5" width="23" height="14" fill="#1e1e1e"/><g fill="#fff"><rect x="2" y="1.3" width="1.5" height="1"/><rect x="5" y="1.3" width="1.5" height="1"/><rect x="8" y="1.3" width="1.5" height="1"/><rect x="11" y="1.3" width="1.5" height="1"/><rect x="14" y="1.3" width="1.5" height="1"/><rect x="17" y="1.3" width="1.5" height="1"/><rect x="20" y="1.3" width="1.5" height="1"/><rect x="2" y="12.7" width="1.5" height="1"/><rect x="5" y="12.7" width="1.5" height="1"/><rect x="8" y="12.7" width="1.5" height="1"/><rect x="11" y="12.7" width="1.5" height="1"/><rect x="14" y="12.7" width="1.5" height="1"/><rect x="17" y="12.7" width="1.5" height="1"/><rect x="20" y="12.7" width="1.5" height="1"/></g><rect x="2" y="3" width="20" height="9" fill="#f0eef2"/><rect x="3" y="6" width="3" height="6" fill="#c87090"/><rect x="6" y="5" width="3" height="7" fill="#e0a0b8"/><rect x="9" y="6" width="4" height="6" fill="#b8a0d0"/><rect x="13" y="4" width="6" height="3" fill="#d0e8f0"/><circle cx="20" cy="13" r="4" fill="#fff"/><path d="M19 10.5v5M19 11h1.6a1.4 1.4 0 0 1 0 2.8H19" fill="none" stroke="#2a90e0" stroke-width="1.2"/></svg><div class="t" style="left:799.2px;width:80px;text-align:center;top:196.0px;font-size:7px;color:#1e1e1e;-webkit-text-stroke:0.1px currentColor">20180815_</div><div class="t" style="left:799.2px;width:80px;text-align:center;top:205.0px;font-size:7px;color:#1e1e1e;-webkit-text-stroke:0.1px currentColor">153056</div>
<!-- bottom panel -->
<div class="a" style="left:454px;top:302.7px;width:491px;height:44px;background:#f0f0f0"></div>
<div class="t cj" style="left:521px;top:312.2px;font-size:6.4px;color:#1e1e1e">文件名(N):</div>
<div class="a" style="left:553.5px;top:308.3px;width:279px;height:14px;background:#fff;border:1px solid #abc0d4;border-radius:1px"></div>
<svg class="a" style="left:825.5px;top:314px" width="5" height="3"><path d="M0 0h4.5L2.25 2.5z" fill="#111"/></svg>
<div class="a" style="left:838.2px;top:308.3px;width:98.5px;height:13px;background:linear-gradient(#f4f4f4,#ececec 50%,#e2e2e2 51%,#d8d8d8);border:1px solid #9a9a9a;border-radius:2px"></div>
<div class="t cj" style="left:840.5px;top:311.7px;font-size:6.3px;color:#1e1e1e;width:86px;overflow:hidden">所有支持的格式 (*.MP4;*.FLV;*</div>
<svg class="a" style="left:928.5px;top:314px" width="5" height="3"><path d="M0 0h4.5L2.25 2.5z" fill="#111"/></svg>
<div class="a" style="left:839.2px;top:325.2px;width:44.6px;height:14.8px;background:linear-gradient(#eaf6fd,#d9f0fc 50%,#bee6fd 51%,#a7d9f5);border:1px solid #4a90c8;border-radius:2px;box-shadow:inset 0 0 0 1px #b8e4fa"></div>
<div class="t cj" style="left:839.2px;width:44.6px;text-align:center;top:329.3px;font-size:6.4px;color:#1e1e1e">打开(O)</div>
<div class="a" style="left:891.3px;top:325.2px;width:44.6px;height:14.8px;background:linear-gradient(#f4f4f4,#ececec 50%,#e0e0e0 51%,#d4d4d4);border:1px solid #8a8a8a;border-radius:2px"></div>
<div class="t cj" style="left:891.3px;width:44.6px;text-align:center;top:329.3px;font-size:6.4px;color:#1e1e1e">取消</div>
<svg class="a" style="left:938px;top:339px" width="6" height="6"><g fill="#b8bcc0"><rect x="4" y="0" width="1" height="1"/><rect x="2" y="2" width="1" height="1"/><rect x="4" y="2" width="1" height="1"/><rect x="0" y="4" width="1" height="1"/><rect x="2" y="4" width="1" height="1"/><rect x="4" y="4" width="1" height="1"/></g></svg>
<div class="a" style="left:450px;top:349px;width:499px;height:1px;background:#2a8a9a"></div>

<!-- orange -->
<div class="a" style="left:989.5px;top:346px;width:24px;height:24px;border-radius:50%;background:#f28c1c;border:1px solid #cfd4d8"></div>
<div class="t" style="left:991.5px;top:354.5px;font-size:6.5px;color:#fff;font-weight:bold">8-</div>
</body></html>
